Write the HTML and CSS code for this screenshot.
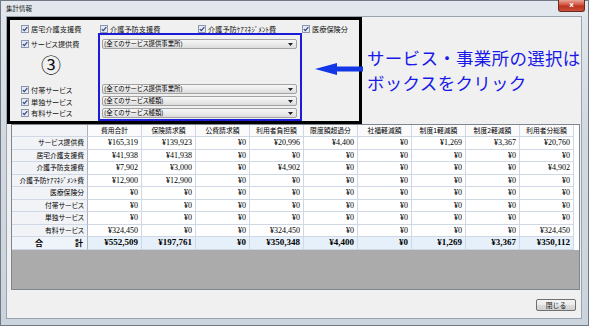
FILE: index.html
```html
<!DOCTYPE html>
<html lang="ja">
<head>
<meta charset="utf-8">
<title>集計情報</title>
<link rel="stylesheet" href="styles.css">
</head>
<body>
<div class="window">
  <div class="titlebar">
    <span class="title">集計情報</span>
    <span class="close">x</span>
  </div>
  <div class="client">
    <div class="top">
      <div class="filter">
        <div class="checks">
          <label class="chk"><svg class="cb" viewBox="0 0 8 8"><rect x="0.5" y="0.5" width="7" height="7" fill="#e4e9f2" stroke="#8a97ae"/><path d="M1.8 4.1 L3.3 5.7 L6.3 2.2" fill="none" stroke="#33467e" stroke-width="1.2"/></svg>居宅介護支援費</label>
          <label class="chk"><svg class="cb" viewBox="0 0 8 8"><rect x="0.5" y="0.5" width="7" height="7" fill="#e4e9f2" stroke="#8a97ae"/><path d="M1.8 4.1 L3.3 5.7 L6.3 2.2" fill="none" stroke="#33467e" stroke-width="1.2"/></svg>介護予防支援費</label>
          <label class="chk"><svg class="cb" viewBox="0 0 8 8"><rect x="0.5" y="0.5" width="7" height="7" fill="#e4e9f2" stroke="#8a97ae"/><path d="M1.8 4.1 L3.3 5.7 L6.3 2.2" fill="none" stroke="#33467e" stroke-width="1.2"/></svg>介護予防ｹｱﾏﾈｼﾞﾒﾝﾄ費</label>
          <label class="chk"><svg class="cb" viewBox="0 0 8 8"><rect x="0.5" y="0.5" width="7" height="7" fill="#e4e9f2" stroke="#8a97ae"/><path d="M1.8 4.1 L3.3 5.7 L6.3 2.2" fill="none" stroke="#33467e" stroke-width="1.2"/></svg>医療保険分</label>
        </div>
        <div class="sel">
          <div class="bluebox"></div>
          <label class="chk g-r2"><svg class="cb" viewBox="0 0 8 8"><rect x="0.5" y="0.5" width="7" height="7" fill="#e4e9f2" stroke="#8a97ae"/><path d="M1.8 4.1 L3.3 5.7 L6.3 2.2" fill="none" stroke="#33467e" stroke-width="1.2"/></svg>サービス提供費</label>
          <div class="combo g-r2"><span>(全てのサービス提供事業所)</span><svg class="dd" viewBox="0 0 5 3"><path d="M0 0 H5 L2.5 3 Z" fill="#222"/></svg></div>
          <div class="num3">③</div>
          <label class="chk g-r4"><svg class="cb" viewBox="0 0 8 8"><rect x="0.5" y="0.5" width="7" height="7" fill="#e4e9f2" stroke="#8a97ae"/><path d="M1.8 4.1 L3.3 5.7 L6.3 2.2" fill="none" stroke="#33467e" stroke-width="1.2"/></svg>付帯サービス</label>
          <div class="combo g-r4"><span>(全てのサービス提供事業所)</span><svg class="dd" viewBox="0 0 5 3"><path d="M0 0 H5 L2.5 3 Z" fill="#222"/></svg></div>
          <label class="chk g-r5"><svg class="cb" viewBox="0 0 8 8"><rect x="0.5" y="0.5" width="7" height="7" fill="#e4e9f2" stroke="#8a97ae"/><path d="M1.8 4.1 L3.3 5.7 L6.3 2.2" fill="none" stroke="#33467e" stroke-width="1.2"/></svg>単独サービス</label>
          <div class="combo g-r5"><span>(全てのサービス種類)</span><svg class="dd" viewBox="0 0 5 3"><path d="M0 0 H5 L2.5 3 Z" fill="#222"/></svg></div>
          <label class="chk g-r6"><svg class="cb" viewBox="0 0 8 8"><rect x="0.5" y="0.5" width="7" height="7" fill="#e4e9f2" stroke="#8a97ae"/><path d="M1.8 4.1 L3.3 5.7 L6.3 2.2" fill="none" stroke="#33467e" stroke-width="1.2"/></svg>有料サービス</label>
          <div class="combo g-r6"><span>(全てのサービス種類)</span><svg class="dd" viewBox="0 0 5 3"><path d="M0 0 H5 L2.5 3 Z" fill="#222"/></svg></div>
        </div>
        <svg class="arrow" viewBox="0 0 48 12"><path d="M0 6 L22 0 L22 3.5 L48 3.5 L48 8.5 L22 8.5 L22 12 Z" fill="#1336e6"/></svg>
      </div>
      <div class="note">
        <div class="note-line">サービス・事業所の選択は</div>
        <div class="note-line">ボックスをクリック</div>
      </div>
    </div>

    <div class="gridview">
      <div class="row head">
        <div class="rh"></div>
        <div class="ch">費用合計</div><div class="ch">保険請求額</div><div class="ch">公費請求額</div><div class="ch">利用者負担額</div><div class="ch">限度額超過分</div><div class="ch">社福軽減額</div><div class="ch">制度1軽減額</div><div class="ch">制度2軽減額</div><div class="ch">利用者分総額</div>
      </div>
      <div class="row">
        <div class="rh">サービス提供費</div>
        <div class="c">¥165,319</div><div class="c">¥139,923</div><div class="c">¥0</div><div class="c">¥20,996</div><div class="c">¥4,400</div><div class="c">¥0</div><div class="c">¥1,269</div><div class="c">¥3,367</div><div class="c">¥20,760</div>
      </div>
      <div class="row">
        <div class="rh">居宅介護支援費</div>
        <div class="c">¥41,938</div><div class="c">¥41,938</div><div class="c">¥0</div><div class="c">¥0</div><div class="c">¥0</div><div class="c">¥0</div><div class="c">¥0</div><div class="c">¥0</div><div class="c">¥0</div>
      </div>
      <div class="row">
        <div class="rh">介護予防支援費</div>
        <div class="c">¥7,902</div><div class="c">¥3,000</div><div class="c">¥0</div><div class="c">¥4,902</div><div class="c">¥0</div><div class="c">¥0</div><div class="c">¥0</div><div class="c">¥0</div><div class="c">¥4,902</div>
      </div>
      <div class="row">
        <div class="rh">介護予防ｹｱﾏﾈｼﾞﾒﾝﾄ費</div>
        <div class="c">¥12,900</div><div class="c">¥12,900</div><div class="c">¥0</div><div class="c">¥0</div><div class="c">¥0</div><div class="c">¥0</div><div class="c">¥0</div><div class="c">¥0</div><div class="c">¥0</div>
      </div>
      <div class="row">
        <div class="rh">医療保険分</div>
        <div class="c">¥0</div><div class="c">¥0</div><div class="c">¥0</div><div class="c">¥0</div><div class="c">¥0</div><div class="c">¥0</div><div class="c">¥0</div><div class="c">¥0</div><div class="c">¥0</div>
      </div>
      <div class="row">
        <div class="rh">付帯サービス</div>
        <div class="c">¥0</div><div class="c">¥0</div><div class="c">¥0</div><div class="c">¥0</div><div class="c">¥0</div><div class="c">¥0</div><div class="c">¥0</div><div class="c">¥0</div><div class="c">¥0</div>
      </div>
      <div class="row">
        <div class="rh">単独サービス</div>
        <div class="c">¥0</div><div class="c">¥0</div><div class="c">¥0</div><div class="c">¥0</div><div class="c">¥0</div><div class="c">¥0</div><div class="c">¥0</div><div class="c">¥0</div><div class="c">¥0</div>
      </div>
      <div class="row">
        <div class="rh">有料サービス</div>
        <div class="c">¥324,450</div><div class="c">¥0</div><div class="c">¥0</div><div class="c">¥324,450</div><div class="c">¥0</div><div class="c">¥0</div><div class="c">¥0</div><div class="c">¥0</div><div class="c">¥324,450</div>
      </div>
      <div class="row total">
        <div class="rh"><span>合</span><span>計</span></div>
        <div class="c">¥552,509</div><div class="c">¥197,761</div><div class="c">¥0</div><div class="c">¥350,348</div><div class="c">¥4,400</div><div class="c">¥0</div><div class="c">¥1,269</div><div class="c">¥3,367</div><div class="c">¥350,112</div>
      </div>
      <div class="empty"></div>
    </div>

    <div class="footer">
      <button class="btn">閉じる</button>
    </div>
  </div>
</div>
</body>
</html>
```

FILE: styles.css
```css
* { box-sizing: border-box; margin: 0; padding: 0; }
html, body { width: 589px; height: 326px; overflow: hidden; }
body {
  font-family: "Noto Sans CJK JP", "Noto Sans", sans-serif;
  background: #cfd6de;
  color: #000;
}

.window {
  width: 589px;
  height: 326px;
  display: flex;
  flex-direction: column;
  border: 1px solid #707985;
  background: linear-gradient(#e3e8ee, #d2d9e1 40%, #cbd3dc);
  padding: 0 6px 6px 5px;
}

.titlebar {
  height: 15px;
  display: flex;
  align-items: flex-start;
  flex: none;
}
.title {
  font-size: 6.5px;
  line-height: 9px;
  padding-top: 3px;
  color: #1a1a1a;
}
.close {
  margin-left: auto;
  margin-right: -3px;
  margin-top: -1px;
  width: 27px;
  height: 12px;
  border: 1px solid #6b2a1f;
  border-top: none;
  border-radius: 0 0 3px 3px;
  background: linear-gradient(#e9a597, #d0533f 45%, #bb321e 55%, #c9503a);
  color: #fff;
  font-family: "DejaVu Sans", sans-serif;
  font-weight: bold;
  font-size: 7px;
  line-height: 11px;
  text-align: center;
}

.client {
  flex: 1;
  display: flex;
  flex-direction: column;
  background: #f0f0f0;
  border: 1px solid #9aa3ae;
}

.top {
  display: flex;
  align-items: flex-start;
  flex: none;
}

.filter {
  position: relative;
  width: 355px;
  height: 107px;
  border: 3px solid #000;
  flex: none;
}

.chk {
  display: flex;
  align-items: center;
  gap: 2px;
  font-size: 7.2px;
  line-height: 8px;
  white-space: nowrap;
  font-feature-settings: "palt";
  color: #111;
}
.cb { width: 8px; height: 8px; flex: none; }

.checks {
  height: 13px;
  display: grid;
  grid-template-columns: 79px 98px 104px auto;
  align-items: end;
  padding-left: 11px;
}

.sel {
  display: grid;
  grid-template-columns: 88px 204px;
  grid-template-rows: 6px 10px 35px 12px 12px 10px 3px;
}
.sel > .chk { grid-column: 1; padding-left: 11px; align-self: center; }
.bluebox {
  grid-column: 2;
  grid-row: 1 / -1;
  border: 2px solid #1c1cd8;
}
.g-r2 { grid-row: 2; }
.g-r4 { grid-row: 4; }
.g-r5 { grid-row: 5; }
.g-r6 { grid-row: 6; }

.combo {
  grid-column: 2;
  height: 10px;
  margin: 0 5px 0 4px;
  border: 1px solid #a3a3a3;
  border-radius: 2px;
  background: linear-gradient(#f7f7f7, #ebebeb 50%, #dcdcdc);
  display: flex;
  align-items: center;
  justify-content: space-between;
  padding: 0 3px 0 1px;
  font-size: 6.4px;
  line-height: 8px;
  white-space: nowrap;
  font-feature-settings: "palt";
}
.dd { width: 5px; height: 3px; }

.num3 {
  grid-column: 1;
  grid-row: 3;
  font-size: 20px;
  line-height: 20px;
  padding-left: 31px;
  padding-top: 6px;
  color: #111;
}

.arrow {
  position: absolute;
  left: 305px;
  top: 43px;
  width: 48px;
  height: 12px;
}

.note {
  margin-left: 5px;
  padding-top: 28px;
  color: #1a1ae8;
  white-space: nowrap;
}
.note-line {
  font-size: 17.5px;
  line-height: 25.4px;
  letter-spacing: 0.3px;
}

.gridview {
  flex: none;
  height: 166px;
  width: 569px;
  margin-left: 4px;
  border: 1px solid #7f8690;
  background: #ababab;
  display: flex;
  flex-direction: column;
}

.row {
  display: grid;
  grid-template-columns: 76px repeat(9, 54px);
  height: 12.5px;
  background: #fff;
  flex: none;
}
.row.head { height: 12px; background: #fff; }

.rh, .c, .ch {
  border-right: 1px solid #d0d7e5;
  border-bottom: 1px solid #d0d7e5;
  white-space: nowrap;
  overflow: hidden;
}
.rh {
  background: #f1f3f6;
  border-right-color: #a9b3c1;
  text-align: right;
  padding-right: 3px;
  font-size: 6.8px;
  line-height: 11.5px;
  font-feature-settings: "palt";
}
.ch {
  background: #fbfbfc;
  text-align: center;
  font-size: 6.8px;
  line-height: 11px;
  font-feature-settings: "palt";
}
.c {
  text-align: right;
  padding-right: 3px;
  font-family: "Liberation Serif", serif;
  font-size: 8px;
  line-height: 11.5px;
}

.row.total .c {
  background: #e6f0fa;
  font-weight: bold;
  font-size: 9px;
}
.row.total .rh {
  background: #eef4fa;
  display: flex;
  justify-content: space-between;
  padding: 0 4px 0 23px;
  font-weight: bold;
  font-size: 8px;
}

.empty { flex: 1; }

.footer {
  flex: 1;
  display: flex;
  justify-content: flex-end;
  align-items: flex-start;
  padding: 9px 5px 0 0;
}
.btn {
  width: 40px;
  height: 12px;
  border: 1px solid #707070;
  border-radius: 2px;
  background: linear-gradient(#f3f3f3, #ebebeb 50%, #dddddd 51%, #cfcfcf);
  font-family: "Noto Sans CJK JP", sans-serif;
  font-size: 6.8px;
  line-height: 10px;
  color: #111;
}
```
